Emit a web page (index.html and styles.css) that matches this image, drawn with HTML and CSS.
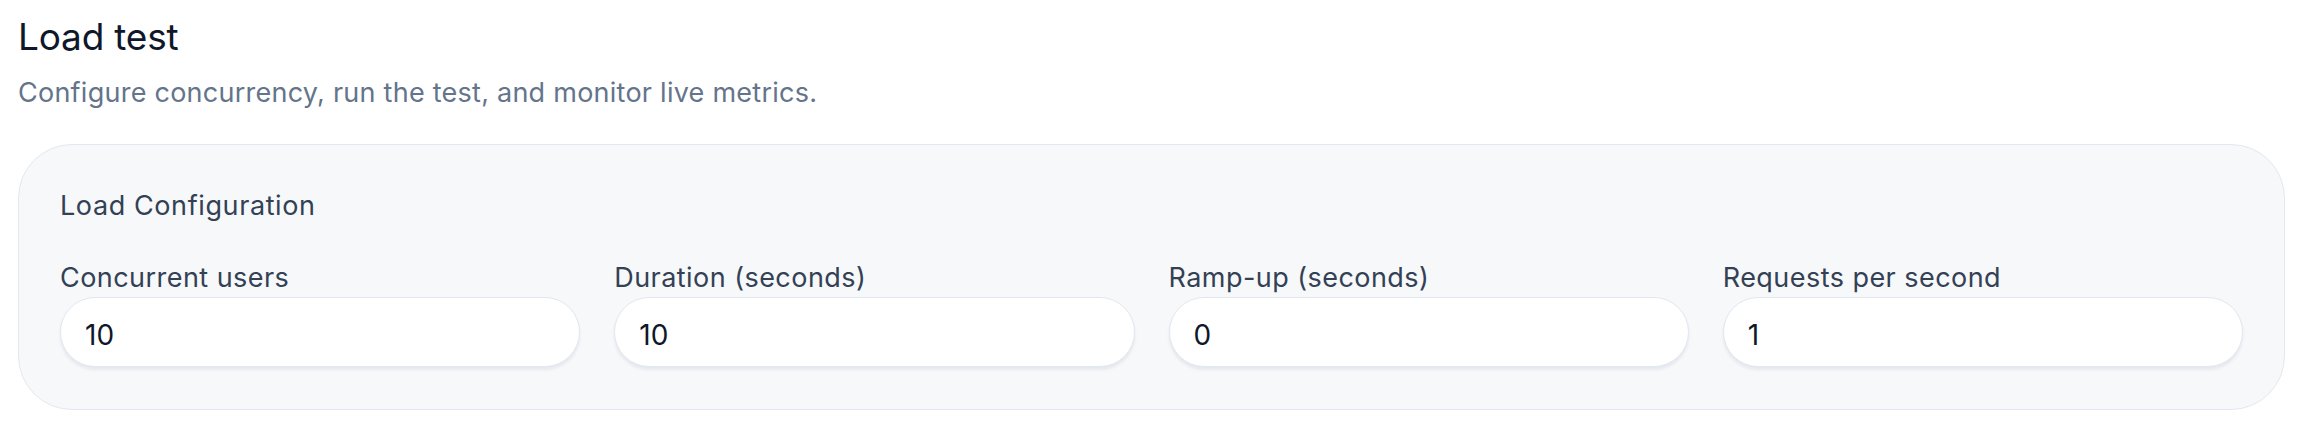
FILE: index.html
```html
<!DOCTYPE html>
<html lang="en">
<head>
    <meta charset="UTF-8">
    <meta name="viewport" content="width=device-width, initial-scale=1.0">
    <title>Load test</title>
    <link rel="stylesheet" href="styles.css">
</head>
<body>
    <h1 class="page-title">Load test</h1>
    <p class="page-sub">Configure concurrency, run the test, and monitor live metrics.</p>

    <!-- config card -->
    <section class="card">
        <h2 class="card-title">Load Configuration</h2>
        <div class="fields">
            <label class="field">
                <span class="field-label">Concurrent users</span>
                <input class="field-input" type="text" value="10">
            </label>
            <label class="field">
                <span class="field-label">Duration (seconds)</span>
                <input class="field-input" type="text" value="10">
            </label>
            <label class="field">
                <span class="field-label">Ramp-up (seconds)</span>
                <input class="field-input" type="text" value="0">
            </label>
            <label class="field">
                <span class="field-label">Requests per second</span>
                <input class="field-input" type="text" value="1">
            </label>
        </div>
    </section>
</body>
</html>
```

FILE: styles.css
```css
body {
    margin: 0;
    padding: 15px 25px 0 18px;
    background: #ffffff;
    font-family: 'Inter', 'Noto Sans', sans-serif;
    color: #0f172a;
}

.page-title {
    margin: 0;
    font-size: 37px;
    line-height: 44px;
    font-weight: 400;
    letter-spacing: -0.2px;
    color: #0f172a;
}

.page-sub {
    margin: 16px 0 33px;
    font-size: 27px;
    line-height: 36px;
    color: #64748b;
    letter-spacing: 0.25px;
}

/* card */
.card {
    background: #f7f8fa;
    border: 1.5px solid #e2e8f0;
    border-radius: 54px;
    padding: 43px 41px 42px;
}

.card-title {
    margin: 0 0 36px;
    font-size: 27px;
    line-height: 36px;
    font-weight: 400;
    color: #334155;
    letter-spacing: 0.6px;
}

.fields {
    display: grid;
    grid-template-columns: repeat(4, 1fr);
    gap: 34px;
}

.field {
    display: flex;
    flex-direction: column;
    gap: 1px;
}

.field-label {
    font-size: 27px;
    line-height: 36px;
    color: #334155;
    letter-spacing: 0.45px;
}

.field-input {
    height: 70px;
    box-sizing: border-box;
    border: 1.5px solid #e2e8f0;
    border-radius: 35px;
    background: #ffffff;
    padding: 6px 24px 0;
    font-family: inherit;
    font-size: 28px;
    color: #0f172a;
    box-shadow: 0 3px 3px rgba(148, 163, 184, 0.18);
    outline: none;
}
```
